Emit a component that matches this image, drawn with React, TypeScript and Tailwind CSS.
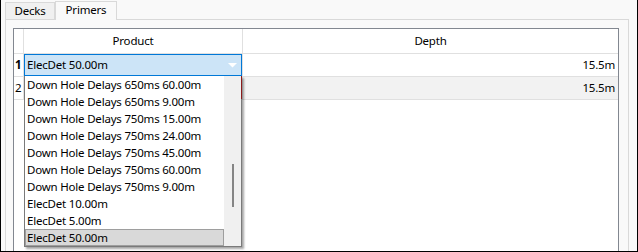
const items = [
    'Down Hole Delays 650ms 60.00m',
    'Down Hole Delays 650ms 9.00m',
    'Down Hole Delays 750ms 15.00m',
    'Down Hole Delays 750ms 24.00m',
    'Down Hole Delays 750ms 45.00m',
    'Down Hole Delays 750ms 60.00m',
    'Down Hole Delays 750ms 9.00m',
    'ElecDet 10.00m',
    'ElecDet 5.00m',
    'ElecDet 50.00m',
];

export default function App() {
    return (
        <div className="w-[638px] h-[252px] bg-[#f9f9f9] border-l border-r border-b border-black flex flex-col overflow-hidden font-['Noto_Sans',sans-serif] text-[11.5px] tracking-[-0.2px] text-black">
            {/* tab strip */}
            <div className="h-[19px] pl-[4px] flex items-end">
                <div className="w-[50px] h-[17px] bg-[#f0f0f0] border border-b-0 border-[#d9d9d9] flex items-center justify-center leading-none">
                    Decks
                </div>
                <div className="w-[62px] h-[19px] -mb-px relative z-10 bg-[#f9f9f9] border border-b-0 border-[#d9d9d9] flex items-center justify-center leading-none pb-[2px]">
                    Primers
                </div>
            </div>

            {/* tab page */}
            <div className="flex-1 ml-[4px] mr-[8px] border border-b-0 border-[#d9d9d9] pt-[8px] pl-[7px] pr-[9px] flex flex-col">
                <div className="flex-1 bg-white border border-b-0 border-[#828790]">
                    <div className="grid grid-cols-[10px_219px_1fr] grid-rows-[25px_23px_23px]">
                        {/* header */}
                        <div className="border-r border-b border-[#e0e0e0]" />
                        <div className="border-r border-b border-[#e0e0e0] flex items-center justify-center">Product</div>
                        <div className="border-b border-[#e0e0e0] flex items-center justify-center">Depth</div>

                        {/* row 1 */}
                        <div className="border-r border-b border-[#e0e0e0] flex items-center font-bold pl-[1px]">1</div>
                        <div className="border-r border-b border-[#e0e0e0] relative z-20">
                            <div className="h-full bg-[#cce4f7] border border-[#0078d7] flex items-center pl-[2px] pr-[4px]">
                                <span className="flex-1">ElecDet 50.00m</span>
                                <svg width="9" height="5" viewBox="0 0 9 5">
                                    <path d="M0 0 L9 0 L4.5 4.5 Z" fill="#ffffff" />
                                </svg>
                            </div>

                            {/* dropdown list */}
                            <div className="absolute left-0 top-full w-[218px] bg-white border border-t-0 border-[#7a7a7a] shadow-[2px_2px_2px_rgba(0,0,0,0.35)] flex">
                                <div className="flex-1 flex flex-col">
                                    {items.map((item, i) => (
                                        <div
                                            key={i}
                                            className={
                                                i === items.length - 1
                                                    ? 'h-[17px] flex items-center pl-[1px] bg-[#d9d9d9] border border-[#9e9e9e]'
                                                    : 'h-[17px] flex items-center pl-[2px]'
                                            }
                                        >
                                            {item}
                                        </div>
                                    ))}
                                </div>
                                <div className="w-[17px] bg-[#f0f0f0] flex justify-center pt-[88px]">
                                    <div className="w-[2px] h-[43px] bg-[#858585]" />
                                </div>
                                <span className="absolute -right-px top-0 w-px h-[23px] bg-[#8b1a1a]" />
                            </div>
                        </div>
                        <div className="border-b border-[#e0e0e0] flex items-center justify-end pr-[3px]">15.5m</div>

                        {/* row 2 */}
                        <div className="border-r border-b border-[#e0e0e0] flex items-center pl-[1px]">2</div>
                        <div className="border-r border-b border-[#e0e0e0] bg-[#f2f2f2]" />
                        <div className="border-b border-[#e0e0e0] bg-[#f2f2f2] flex items-center justify-end pr-[3px]">15.5m</div>
                    </div>
                </div>
            </div>
        </div>
    );
}
